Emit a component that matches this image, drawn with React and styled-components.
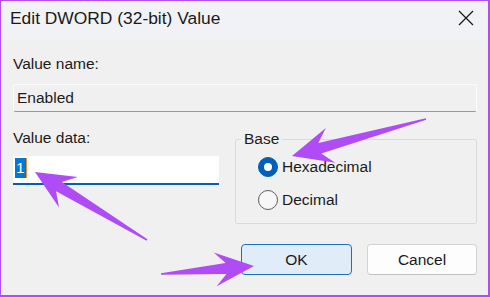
import React from "react";
import styled, { createGlobalStyle } from "styled-components";

const Global = createGlobalStyle`
  html, body { margin: 0; padding: 0; background: #f0f0f0; }
  * { box-sizing: border-box; }
`;

const FONT = `"Liberation Sans", Arial, sans-serif`;
const PURPLE = "#b04cf6";

const Window = styled.div`
  position: relative;
  width: 490px;
  height: 297px;
  border-style: solid;
  border-color: ${PURPLE};
  border-width: 1px 2px 2px 1px;
  background: #f0f0f0;
  font-family: ${FONT};
  color: #1b1b1b;
  display: flex;
  flex-direction: column;
  overflow: hidden;
`;

const TitleBar = styled.div`
  height: 39px;
  flex: none;
  background: #f1f2f6;
  display: flex;
  align-items: flex-start;
  justify-content: space-between;
  padding: 7px 13px 0 9px;
`;

const Title = styled.div`
  font-size: 17.4px;
  line-height: 20px;
  color: #1a1a1a;
`;

const CloseBox = styled.div`
  width: 18px;
  height: 18px;
  margin-top: 1px;
  display: flex;
  align-items: center;
  justify-content: center;
`;

const Body = styled.div`
  flex: 1;
  display: flex;
  flex-direction: column;
  padding: 0 11px 0 11px;
`;

const Label = styled.div`
  font-size: 15.5px;
  line-height: 20px;
  margin-top: ${(p) => p.$mt || 0}px;
  padding-left: 1px;
`;

const ReadonlyField = styled.div`
  margin-top: 10px;
  height: 28px;
  background: #f0f0f0;
  border: 1px solid #fbfbfb;
  border-bottom-color: #9a9a9a;
  border-radius: 3px;
  font-size: 15.5px;
  line-height: 20px;
  padding: 3px 0 0 3px;
  margin-left: 1px;
`;

const Row = styled.div`
  display: flex;
  margin-top: 16px;
`;

const LeftCol = styled.div`
  width: 207px;
  display: flex;
  flex-direction: column;
`;

const DataInput = styled.div`
  margin-top: 8px;
  margin-left: 1px;
  height: 29px;
  background: #ffffff;
  border-bottom: 2px solid #005fb8;
  padding: 2px 0 0 2px;
  display: flex;
  align-items: flex-start;
  font-size: 15.5px;
  line-height: 20px;
`;

const Selected = styled.span`
  background: #0078d4;
  color: #ffffff;
  padding: 0 1px 0 1px;
  height: 20px;
`;

const Caret = styled.span`
  width: 1px;
  height: 20px;
  background: #f08a1c;
`;

const GroupBox = styled.fieldset`
  flex: 1;
  margin: 1px 0 0 16px;
  border: 1px solid #dadada;
  border-radius: 2px;
  padding: 8px 0 13px 0;
  min-width: 0;
  display: flex;
  flex-direction: column;
  gap: 13px;
`;

const Legend = styled.legend`
  font-size: 15.5px;
  line-height: 20px;
  margin-left: 5px;
  padding: 0 3px;
`;

const RadioRow = styled.div`
  display: flex;
  align-items: center;
  gap: 4px;
  height: 20px;
  margin-left: 22px;
  font-size: 15.5px;
  line-height: 20px;
`;

const RadioCircle = styled.span`
  width: 20px;
  height: 20px;
  border-radius: 50%;
  flex: none;
  display: flex;
  align-items: center;
  justify-content: center;
  background: ${(p) => (p.$checked ? "#005fb8" : "#f7f7f7")};
  border: 1px solid ${(p) => (p.$checked ? "#005fb8" : "#5f5f5f")};
  &::after {
    content: "";
    display: ${(p) => (p.$checked ? "block" : "none")};
    width: 8px;
    height: 8px;
    border-radius: 50%;
    background: #ffffff;
  }
`;

const ButtonRow = styled.div`
  display: flex;
  justify-content: flex-end;
  gap: 15px;
  margin-top: 20px;
`;

const Button = styled.div`
  width: ${(p) => p.$w}px;
  height: 31px;
  border-radius: 4px;
  display: flex;
  align-items: center;
  justify-content: center;
  font-size: 15.5px;
  color: #1a1a1a;
  background: ${(p) => (p.$primary ? "#e0ecf8" : "#fdfdfd")};
  border: 1px solid ${(p) => (p.$primary ? "#1a6fc4" : "#d3d3d3")};
  border-bottom-color: ${(p) => (p.$primary ? "#1a6fc4" : "#c2c2c2")};
`;

const Overlay = styled.svg`
  position: absolute;
  left: -1px;
  top: -1px;
  width: 490px;
  height: 297px;
  pointer-events: none;
`;

function arrowPath(tip, tail, L = 39, W = 18, s = 5.5, t = 0.8) {
  const dx = tail[0] - tip[0];
  const dy = tail[1] - tip[1];
  const len = Math.hypot(dx, dy);
  const u = [dx / len, dy / len];
  const n = [-u[1], u[0]];
  const pt = (a, b) =>
    `${(tip[0] + u[0] * a + n[0] * b).toFixed(1)},${(tip[1] + u[1] * a + n[1] * b).toFixed(1)}`;
  return `M${pt(0, 0)} L${pt(L, -W)} L${pt(L * 0.72, -s)} L${pt(len, -t)} L${pt(len, t)} L${pt(L * 0.72, s)} L${pt(L, W)} Z`;
}

const arrows = [
  { tip: [292, 156], tail: [426, 119], L: 40, W: 18 },
  { tip: [35, 172], tail: [147, 240], L: 39, W: 18 },
  { tip: [254, 266], tail: [161, 274], L: 39, W: 17 },
];

export default function App() {
  return (
    <>
      <Global />
      <Window>
        <TitleBar>
          <Title>Edit DWORD (32-bit) Value</Title>
          <CloseBox>
            <svg width="16" height="16" viewBox="0 0 16 16">
              <path d="M1 1 L15 15 M15 1 L1 15" stroke="#1b1b1b" strokeWidth="1.3" />
            </svg>
          </CloseBox>
        </TitleBar>
        <Body>
          <Label $mt={14}>Value name:</Label>
          <ReadonlyField>Enabled</ReadonlyField>
          <Row>
            <LeftCol>
              <Label>Value data:</Label>
              <DataInput>
                <Selected>1</Selected>
                <Caret />
              </DataInput>
            </LeftCol>
            <GroupBox>
              <Legend>Base</Legend>
              <RadioRow>
                <RadioCircle $checked />
                Hexadecimal
              </RadioRow>
              <RadioRow>
                <RadioCircle />
                Decimal
              </RadioRow>
            </GroupBox>
          </Row>
          <ButtonRow>
            <Button $primary $w={111}>OK</Button>
            <Button $w={110}>Cancel</Button>
          </ButtonRow>
        </Body>
        <Overlay viewBox="0 0 490 297">
          {arrows.map((a, i) => (
            <path key={i} d={arrowPath(a.tip, a.tail, a.L, a.W)} fill={PURPLE} />
          ))}
        </Overlay>
      </Window>
    </>
  );
}
